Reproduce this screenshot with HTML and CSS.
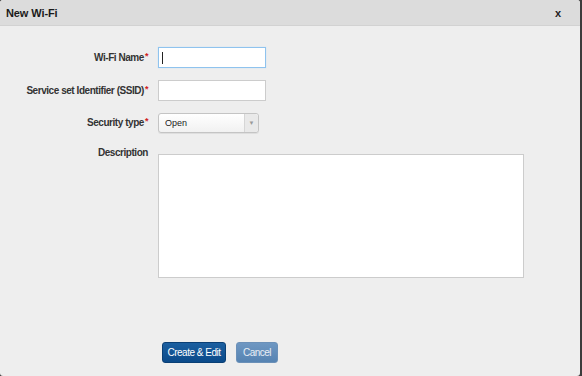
FILE: index.html
```html
<!DOCTYPE html>
<html>
<head>
<meta charset="utf-8">
<link rel="stylesheet" href="styles.css">
</head>
<body>
<div class="dialog">
  <div class="header">
    <span class="title">New Wi-Fi</span>
    <span class="close">x</span>
  </div>
  <div class="body">
    <div class="form">
      <label class="label">Wi-Fi Name<span class="req">*</span></label>
      <div class="input focused"><span class="caret"></span></div>
      <label class="label">Service set Identifier (SSID)<span class="req">*</span></label>
      <div class="input"></div>
      <label class="label">Security type<span class="req">*</span></label>
      <div class="select"><span class="select-text">Open</span><span class="select-arrow">&#9660;</span></div>
      <label class="label label-top">Description</label>
      <div class="textarea"></div>
    </div>
    <div class="footer">
      <button class="btn btn-primary">Create &amp; Edit</button>
      <button class="btn btn-disabled">Cancel</button>
    </div>
  </div>
</div>
</body>
</html>
```

FILE: styles.css
```css
html, body {
  margin: 0;
  padding: 0;
  background: #3c3c3c;
  width: 582px;
  height: 376px;
  overflow: hidden;
  font-family: "Liberation Sans", Arial, sans-serif;
}
.dialog {
  width: 580px;
  height: 376px;
  background: #eeeeee;
  border-radius: 3px;
  display: flex;
  flex-direction: column;
  overflow: hidden;
}
.header {
  height: 25px;
  background: #dcdcdc;
  border-bottom: 1px solid #d2d2d2;
  display: flex;
  align-items: center;
  justify-content: space-between;
  padding: 0 19px 0 6px;
  flex-shrink: 0;
}
.title {
  font-size: 11px;
  font-weight: bold;
  color: #1a1a1a;
  letter-spacing: -0.1px;
  margin-top: 1px;
}
.close {
  font-size: 11px;
  font-weight: bold;
  color: #222;
}
.body {
  flex: 1;
  display: flex;
  flex-direction: column;
}
.form {
  display: grid;
  grid-template-columns: 148px 1fr;
  column-gap: 10px;
  row-gap: 12px;
  padding-top: 21px;
  align-items: center;
}
.label {
  text-align: right;
  font-size: 10px;
  font-weight: bold;
  color: #333;
  line-height: 14px;
  letter-spacing: -0.45px;
  white-space: nowrap;
}
.label-top {
  align-self: start;
  margin-top: 1px;
}
.req {
  color: #d02020;
  font-size: 9px;
  vertical-align: top;
  line-height: 10px;
  margin-left: 1px;
}
.input {
  width: 106px;
  height: 19px;
  background: #fff;
  border: 1px solid #cccccc;
  display: flex;
  align-items: center;
}
.input.focused {
  border-color: #8fc3ee;
  box-shadow: 0 0 1px #b9dbf7;
}
.caret {
  width: 1px;
  height: 12px;
  background: #222;
  margin-left: 3px;
}
.select {
  width: 99px;
  height: 18px;
  border: 1px solid #c4c4c4;
  border-radius: 3px;
  background: linear-gradient(#ffffff, #f1f1f1);
  display: flex;
  align-items: center;
  box-shadow: 0 1px 0 #dedede;
}
.select-text {
  flex: 1;
  font-size: 9px;
  color: #222;
  padding-left: 6px;
}
.select-arrow {
  width: 13px;
  height: 18px;
  border-left: 1px solid #d6d6d6;
  background: #e9e9e9;
  color: #999;
  font-size: 6px;
  display: flex;
  align-items: center;
  justify-content: center;
  border-radius: 0 3px 3px 0;
}
.textarea {
  width: 364px;
  height: 122px;
  background: #fff;
  border: 1px solid #cccccc;
  margin-top: 9px;
}
.footer {
  display: flex;
  gap: 10px;
  padding-left: 162px;
  margin-top: 64px;
}
.btn {
  height: 21px;
  border-radius: 3px;
  font-family: "Liberation Sans", Arial, sans-serif;
  font-size: 10px;
  letter-spacing: -0.5px;
  white-space: nowrap;
  color: #fff;
  padding: 0;
  cursor: default;
}
.btn-primary {
  width: 64px;
  border: 1px solid #0a3f75;
  background: linear-gradient(#1b5fa0, #0b4a8a);
}
.btn-disabled {
  width: 42px;
  border: 1px solid #6b90b8;
  background: linear-gradient(#6e97c2, #5683b2);
  color: #e8eef5;
}
```
